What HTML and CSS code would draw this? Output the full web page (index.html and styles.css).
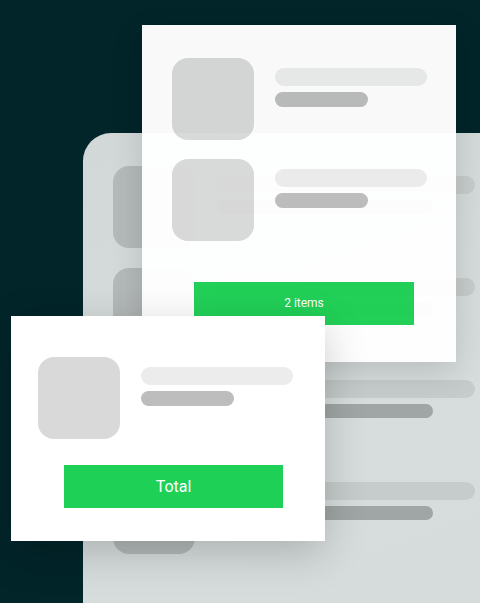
FILE: index.html
```html
<!DOCTYPE html>
<html>
<head>
<meta charset="utf-8">
<link rel="stylesheet" href="styles.css">
</head>
<body>
<div class="stage">
  <div class="card back">
    <div class="row"><div class="thumb"></div><div class="lines"><div class="bar long"></div><div class="bar short"></div></div></div>
    <div class="row"><div class="thumb"></div><div class="lines"><div class="bar long"></div><div class="bar short"></div></div></div>
    <div class="row"><div class="thumb"></div><div class="lines"><div class="bar long"></div><div class="bar short"></div></div></div>
    <div class="row"><div class="thumb"></div><div class="lines"><div class="bar long"></div><div class="bar short"></div></div></div>
  </div>

  <div class="card middle">
    <div class="row"><div class="thumb"></div><div class="lines"><div class="bar long"></div><div class="bar short"></div></div></div>
    <div class="row"><div class="thumb"></div><div class="lines"><div class="bar long"></div><div class="bar short"></div></div></div>
    <div class="btn small">2 items</div>
  </div>

  <div class="card front">
    <div class="row"><div class="thumb"></div><div class="lines"><div class="bar long"></div><div class="bar short"></div></div></div>
    <div class="btn big">Total</div>
  </div>
</div>
</body>
</html>
```

FILE: styles.css
```css
html, body {
  margin: 0;
  padding: 0;
}
body {
  background: #02252a;
  font-family: Roboto, "Liberation Sans", Arial, sans-serif;
  overflow: hidden;
}
.stage {
  position: relative;
  width: 480px;
  height: 603px;
  overflow: hidden;
}
.card {
  position: absolute;
  box-sizing: border-box;
  display: flex;
  flex-direction: column;
  align-items: flex-start;
}
.row {
  display: flex;
  align-items: flex-start;
}
.thumb {
  width: 82px;
  height: 82px;
  border-radius: 16px;
  background: #d9d9d9;
  flex: none;
}
.lines {
  display: flex;
  flex-direction: column;
  gap: 6px;
  margin-left: 21px;
  padding-top: 10px;
}
.bar {
  border-radius: 9px;
}
.bar.long {
  width: 152px;
  height: 18px;
  background: #ececec;
}
.bar.short {
  width: 93px;
  height: 15px;
  background: #bdbdbd;
}

/* back card */
.back {
  left: 83px;
  top: 133px;
  width: 430px;
  height: 500px;
  border-radius: 28px 0 0 0;
  background: linear-gradient(160deg, #d2d8d8 0%, #d7dddd 60%, #d6dcdc 100%);
  padding: 33px 0 0 30px;
  gap: 20px;
}
.back .thumb {
  background: #b4bab9;
}
.back .bar.long {
  width: 259px;
  background: #c6cccb;
}
.back .bar.short {
  width: 217px;
  height: 14px;
  background: #a0a6a5;
}

/* middle card */
.middle {
  left: 142px;
  top: 25px;
  width: 314px;
  height: 337px;
  background: #ffffff;
  opacity: 0.975;
  padding: 33px 0 0 30px;
  gap: 19px;
  box-shadow: 0 10px 30px rgba(0, 0, 0, 0.14);
}
.middle .btn {
  margin-top: 22px;
  margin-left: 22px;
}

/* front card */
.front {
  left: 11px;
  top: 316px;
  width: 314px;
  height: 225px;
  background: #ffffff;
  padding: 41px 0 0 27px;
  box-shadow: 0 12px 40px rgba(0, 0, 0, 0.2);
}
.front .btn {
  margin-top: 26px;
  margin-left: 26px;
}

.btn {
  display: flex;
  align-items: center;
  justify-content: center;
  height: 43px;
  background: #1ed055;
  color: #ffffff;
}
.btn.small {
  width: 220px;
  font-size: 12px;
  padding-bottom: 2px;
  box-sizing: border-box;
}
.btn.big {
  width: 219px;
  font-size: 16px;
  padding-bottom: 1px;
  box-sizing: border-box;
}
```
